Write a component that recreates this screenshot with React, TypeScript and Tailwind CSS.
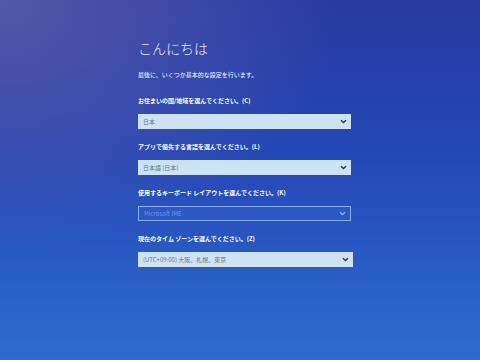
import React from "react";

const font = "font-['Noto_Sans_CJK_JP','Noto_Sans',sans-serif]";

function Chevron({ color = "#2f3640" }: { color?: string }) {
  return (
    <svg width="7" height="5" viewBox="0 0 7 5" className="shrink-0">
      <path d="M1 1.2 L3.5 3.6 L6 1.2" fill="none" stroke={color} strokeWidth="1.4" />
    </svg>
  );
}

type Field = { label: string; value: string; focused?: boolean; width?: string };

const fields: Field[] = [
  { label: "お住まいの国/地域を選んでください。(C)", value: "日本" },
  { label: "アプリで優先する言語を選んでください。(L)", value: "日本語 (日本)" },
  { label: "使用するキーボード レイアウトを選んでください。(K)", value: "Microsoft IME", focused: true },
  { label: "現在のタイム ゾーンを選んでください。(Z)", value: "(UTC+09:00) 大阪、札幌、東京", width: "w-[215px]" },
];

export default function App() {
  return (
    <div
      className={`h-[360px] w-[480px] overflow-hidden bg-[radial-gradient(ellipse_at_0%_0%,#5358a8_0%,rgba(80,85,168,0)_50%),linear-gradient(to_bottom,#283aa2,#2448b8_45%,#2d6dcf)] ${font}`}
    >
      <div className="flex flex-col pl-[138px] pt-[40px]">
        <h1 className="h-[16px] text-[14px] font-light leading-[16px] text-[#e8eefc]">こんにちは</h1>
        <p className="mt-[15px] h-[8px] text-[6px] leading-[8px] text-white">最後に、いくつか基本的な設定を行います。</p>
        <div className="mt-[18px] flex flex-col gap-[14px]">
          {fields.map((f) => (
            <div key={f.label} className="flex flex-col">
              <span className="h-[8px] text-[6px] font-bold leading-[8px] text-white">{f.label}</span>
              <div
                className={`mt-[9px] flex h-[15px] items-center justify-between pl-[5px] pr-[4px] ${f.width ?? "w-[213px]"} ${
                  f.focused ? "border border-[#8ab0ec] bg-[#2a58c4]" : "bg-[#cde3f1]"
                }`}
              >
                <span className={`text-[6px] leading-[8px] ${f.focused ? "text-[#6f9ae6]" : "text-[#6a7380]"}`}>{f.value}</span>
                <Chevron color={f.focused ? "#8ab0ec" : "#2f3640"} />
              </div>
            </div>
          ))}
        </div>
      </div>
    </div>
  );
}
